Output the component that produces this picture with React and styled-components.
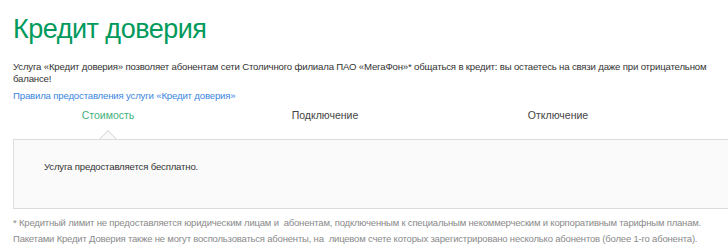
import React from 'react';
import styled, {createGlobalStyle} from 'styled-components';

const GlobalStyle = createGlobalStyle`
  html, body {
    margin: 0;
    padding: 0;
    background: #fff;
  }
  body {
    font-family: "Liberation Sans", Arial, sans-serif;
    color: #333;
    overflow: hidden;
  }
`;

const Page = styled.div`
  width: 760px;
  padding: 9px 0 0 13px;
`;

const Title = styled.h1`
  margin: 0;
  font-weight: normal;
  font-size: 27px;
  letter-spacing: -0.5px;
  line-height: 40px;
  color: #009a5c;
`;

const Lead = styled.p`
  margin: 12px 0 0;
  width: 700px;
  font-size: 9.6px;
  letter-spacing: -0.17px;
  line-height: 12px;
  color: #333;
`;

const Link = styled.a`
  display: block;
  margin-top: 5px;
  font-size: 9.6px;
  letter-spacing: -0.17px;
  line-height: 12px;
  color: #3a86e0;
  text-decoration: none;
`;

const Tabs = styled.div`
  display: flex;
  margin-top: 5px;
  height: 32px;
`;

const Tab = styled.div`
  position: relative;
  flex: 0 0 ${props => props.width}px;
  text-align: center;
  font-size: 10.5px;
  line-height: 16px;
  color: ${props => props.active ? '#3fb07c' : '#444'};

  ${props => props.active && `
    &::after {
      content: '';
      position: absolute;
      left: 50%;
      bottom: -1px;
      width: 13px;
      height: 13px;
      margin-left: -7px;
      background: #fafafa;
      border-left: 1px solid #dcdcdc;
      border-top: 1px solid #dcdcdc;
      transform: translateY(50%) rotate(45deg);
    }
  `}
`;

const Panel = styled.div`
  position: relative;
  height: 70px;
  box-sizing: border-box;
  padding: 20px 0 0 30px;
  background: #fafafa;
  border: 1px solid #dcdcdc;
  border-right: none;
  font-size: 9.6px;
  letter-spacing: -0.17px;
  line-height: 13px;
  color: #333;
`;

const Notes = styled.div`
  margin-top: 6px;
  font-size: 9.5px;
  letter-spacing: -0.19px;
  line-height: 16px;
  color: #8a8a8a;
  white-space: nowrap;
`;

const tabs = [
  {label: 'Стоимость', width: 190, active: true},
  {label: 'Подключение', width: 244},
  {label: 'Отключение', width: 222}
];

export default function App() {
  return (
    <Page>
      <GlobalStyle />
      <Title>Кредит доверия</Title>
      <Lead>
        Услуга «Кредит доверия» позволяет абонентам сети Столичного филиала ПАО «МегаФон»* общаться в кредит: вы остаетесь на связи даже при отрицательном балансе!
      </Lead>
      <Link href="#">Правила предоставления услуги «Кредит доверия»</Link>
      <Tabs>
        {tabs.map(t =>
          <Tab key={t.label} width={t.width} active={t.active}>{t.label}</Tab>
        )}
      </Tabs>
      <Panel>Услуга предоставляется бесплатно.</Panel>
      <Notes>
        <div>* Кредитный лимит не предоставляется юридическим лицам и&nbsp; абонентам, подключенным к специальным некоммерческим и корпоративным тарифным планам.</div>
        <div>Пакетами Кредит Доверия также не могут воспользоваться абоненты, на&nbsp; лицевом счете которых зарегистрировано несколько абонентов (более 1-го абонента).</div>
      </Notes>
    </Page>
  );
}
